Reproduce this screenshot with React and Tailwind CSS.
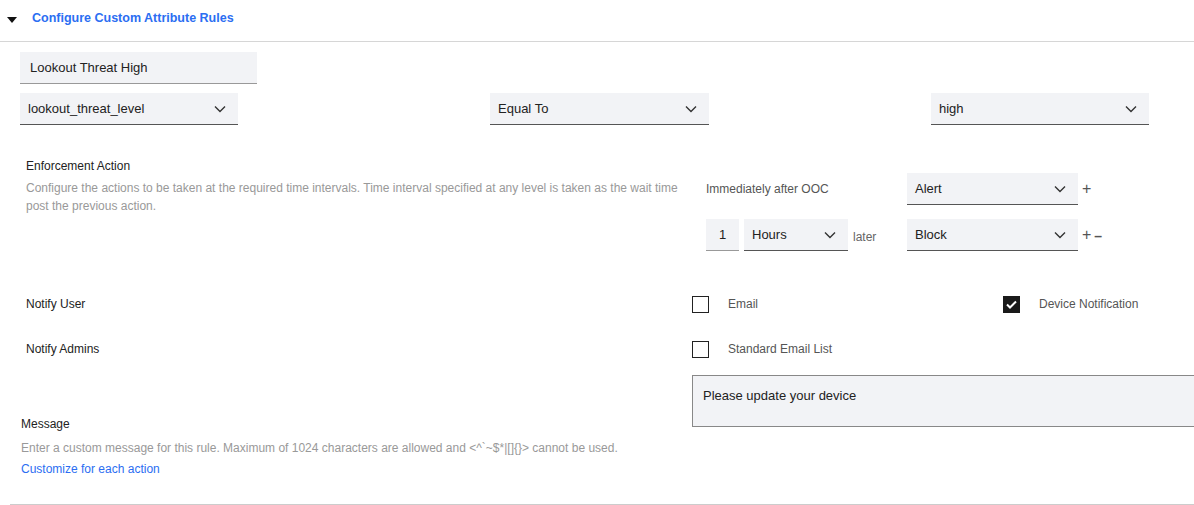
import React from "react";

const Chev = () => (
  <svg width="12" height="8" viewBox="0 0 12 8" fill="none" stroke="#333" strokeWidth="1.4"><path d="M1 1.5l5 5 5-5" /></svg>
);

const Select = ({ w, label, h = "h-[32px]" }) => (
  <div className={`${w} ${h} bg-[#f2f3f6] border-b border-[#555] flex items-center justify-between pl-2 pr-3 text-[13px] text-[#222] shrink-0`}>
    <span>{label}</span>
    <Chev />
  </div>
);

const Box = ({ checked }) =>
  checked ? (
    <div className="w-[17px] h-[17px] bg-[#1a1a1a] flex items-center justify-center shrink-0">
      <svg width="11" height="9" viewBox="0 0 11 9" fill="none" stroke="#fff" strokeWidth="2"><path d="M1 4.5l3 3 6-6" /></svg>
    </div>
  ) : (
    <div className="w-[17px] h-[17px] border border-[#222] bg-white shrink-0" />
  );

export default function App() {
  return (
    <div className="w-[1194px] h-[505px] bg-white overflow-hidden text-[#333]" style={{ fontFamily: "'Liberation Sans', Arial, sans-serif" }}>
      <div className="h-[42px] border-b border-[#d6d6d6] flex items-center pl-[7px]">
        <svg width="10" height="6" viewBox="0 0 10 6" className="mr-[15px] mt-[-2px]"><path d="M0 0h10L5 6z" fill="#111" /></svg>
        <span className="text-[12.5px] font-bold text-[#2b6ef2] mt-[-5px]">Configure Custom Attribute Rules</span>
      </div>
      <div className="pl-[20px] pt-[10px]">
        <div className="w-[237px] h-[32px] bg-[#f2f3f6] border-b border-[#999] flex items-center pl-[10px] text-[13px] text-[#222]">Lookout Threat High</div>
        <div className="flex mt-[9px]">
          <Select w="w-[218px]" label="lookout_threat_level" />
          <div className="ml-[252px]"><Select w="w-[219px]" label="Equal To" /></div>
          <div className="ml-[222px]"><Select w="w-[218px]" label="high" /></div>
        </div>
      </div>
      <div className="flex mt-[32px]">
        <div className="w-[706px] shrink-0 pl-[26px]">
          <div className="text-[12px] text-[#222]">Enforcement Action</div>
          <div className="text-[12px] text-[#999] leading-[18px] mt-[4px] w-[660px]">Configure the actions to be taken at the required time intervals. Time interval specified at any level is taken as the wait time post the previous action.</div>
        </div>
        <div className="pt-[16px]">
          <div className="flex items-center">
            <div className="w-[201px] text-[12px] text-[#555]">Immediately after OOC</div>
            <Select w="w-[171px]" label="Alert" />
            <span className="ml-[4px] text-[16px] text-[#555]">+</span>
          </div>
          <div className="flex items-center mt-[14px]">
            <div className="w-[33px] h-[32px] bg-[#f2f3f6] border-b border-[#999] flex items-center justify-center text-[13px] text-[#222]">1</div>
            <div className="ml-[5px]"><Select w="w-[104px]" label="Hours" /></div>
            <span className="ml-[5px] w-[54px] text-[12px] text-[#666] mt-[4px]">later</span>
            <Select w="w-[171px]" label="Block" />
            <span className="ml-[4px] text-[16px] text-[#555]">+</span>
            <span className="ml-[3px] text-[14px] text-[#555] font-bold mt-[3px]">–</span>
          </div>
        </div>
      </div>
      <div className="flex items-center mt-[43px] h-[20px]">
        <div className="w-[692px] shrink-0 pl-[26px] text-[12px] text-[#222]">Notify User</div>
        <Box />
        <span className="ml-[19px] w-[275px] text-[12px] text-[#555]">Email</span>
        <Box checked />
        <span className="ml-[19px] text-[12px] text-[#555]">Device Notification</span>
      </div>
      <div className="flex items-center mt-[25px] h-[20px]">
        <div className="w-[692px] shrink-0 pl-[26px] text-[12px] text-[#222]">Notify Admins</div>
        <Box />
        <span className="ml-[19px] text-[12px] text-[#555]">Standard Email List</span>
      </div>
      <div className="flex mt-[16px]">
        <div className="w-[692px] shrink-0 pl-[21px] pt-[40px]">
          <div className="text-[12px] text-[#222]">Message</div>
          <div className="text-[12px] text-[#999] mt-[6px]">Enter a custom message for this rule. Maximum of 1024 characters are allowed and &lt;^`~$*|[]{"{}"}&gt; cannot be used.</div>
          <div className="text-[12px] text-[#2b6ef2] mt-[3px]">Customize for each action</div>
        </div>
        <div className="w-[510px] shrink-0 h-[52px] bg-[#f2f3f6] border border-[#888] pl-[10px] pt-[10px] text-[13px] text-[#222]">Please update your device</div>
      </div>
      <div className="ml-[10px] mt-[26px] border-b border-[#ccc]" />
    </div>
  );
}
